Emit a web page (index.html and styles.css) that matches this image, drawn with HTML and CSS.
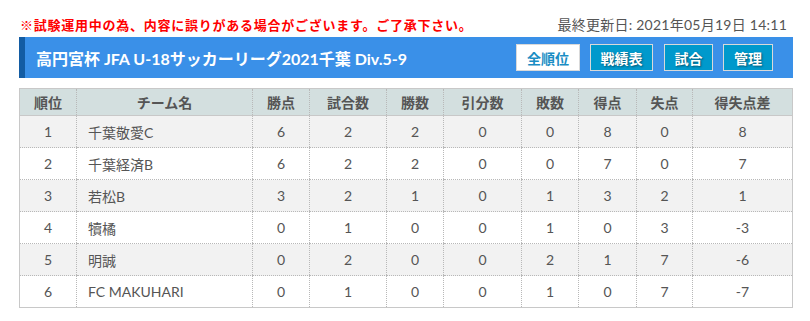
FILE: index.html
```html
<!DOCTYPE html>
<html lang="ja">
<head>
<meta charset="utf-8">
<title>高円宮杯 JFA U-18サッカーリーグ2021千葉 Div.5-9</title>
<link rel="stylesheet" href="styles.css">
</head>
<body>
<div class="page">
  <div class="topline">
    <p class="notice">※試験運用中の為、内容に誤りがある場合がございます。ご了承下さい。</p>
    <p class="updated">最終更新日: 2021年05月19日 14:11</p>
  </div>
  <div class="titlebar">
    <h1 class="title">高円宮杯 JFA U-18サッカーリーグ2021千葉 Div.5-9</h1>
    <nav class="tabs">
      <a class="tab tab-active w64">全順位</a>
      <a class="tab w63">戦績表</a>
      <a class="tab w49">試合</a>
      <a class="tab w50">管理</a>
    </nav>
  </div>
  <table class="standings">
    <colgroup>
      <col class="c57"><col class="c176"><col class="c57"><col class="c77"><col class="c57"><col class="c78"><col class="c57"><col class="c58"><col class="c56"><col class="c100">
    </colgroup>
    <thead>
      <tr><th>順位</th><th>チーム名</th><th>勝点</th><th>試合数</th><th>勝数</th><th>引分数</th><th>敗数</th><th>得点</th><th>失点</th><th>得失点差</th></tr>
    </thead>
    <tbody>
      <tr><td>1</td><td class="name">千葉敬愛C</td><td>6</td><td>2</td><td>2</td><td>0</td><td>0</td><td>8</td><td>0</td><td>8</td></tr>
      <tr><td>2</td><td class="name">千葉経済B</td><td>6</td><td>2</td><td>2</td><td>0</td><td>0</td><td>7</td><td>0</td><td>7</td></tr>
      <tr><td>3</td><td class="name">若松B</td><td>3</td><td>2</td><td>1</td><td>0</td><td>1</td><td>3</td><td>2</td><td>1</td></tr>
      <tr><td>4</td><td class="name">犢橘</td><td>0</td><td>1</td><td>0</td><td>0</td><td>1</td><td>0</td><td>3</td><td>-3</td></tr>
      <tr><td>5</td><td class="name">明誠</td><td>0</td><td>2</td><td>0</td><td>0</td><td>2</td><td>1</td><td>7</td><td>-6</td></tr>
      <tr><td>6</td><td class="name">FC MAKUHARI</td><td>0</td><td>1</td><td>0</td><td>0</td><td>1</td><td>0</td><td>7</td><td>-7</td></tr>
    </tbody>
  </table>
</div>
</body>
</html>
```
FILE: styles.css
```css
* { box-sizing: border-box; }
html, body { margin: 0; padding: 0; background: #fff; }
body {
  font-family: Lato, "Noto Sans CJK JP", sans-serif;
  color: #555;
}
.page {
  width: 774px;
  margin-left: 19px;
  padding-top: 14px;
}
.topline {
  display: flex;
  justify-content: space-between;
  align-items: center;
  height: 20px;
  margin-bottom: 3px;
}
.notice {
  margin: 0 0 0 1px;
  color: #f00;
  font-weight: bold;
  font-size: 13px;
  letter-spacing: 0.75px;
}
.updated {
  margin: 0 6px 0 0;
  font-size: 14px;
  letter-spacing: 0.25px;
  color: #555;
}
.titlebar {
  display: flex;
  align-items: center;
  justify-content: space-between;
  height: 41px;
  background: #3a90e8;
  border-left: 6px solid #135ca3;
  padding: 0 20px 0 11px;
}
.title {
  margin: 0;
  color: #fff;
  font-size: 16px;
  font-weight: bold;
}
.tabs {
  display: flex;
  gap: 10px;
}
.tab {
  display: flex;
  align-items: center;
  justify-content: center;
  height: 27px;
  background: #0099cc;
  border: 1px solid #d9d9d9;
  color: #fff;
  font-size: 14px;
  font-weight: bold;
  text-shadow: 1px 1px 2px rgba(0,0,0,0.45);
}
.tab-active {
  background: #fff;
  color: #1a8dc4;
  text-shadow: none;
}
.w64 { width: 64px; }
.w63 { width: 63px; margin-right: 1px; }
.w49 { width: 49px; }
.w50 { width: 50px; }
.standings {
  margin-top: 10px;
  width: 773px;
  border-collapse: collapse;
  table-layout: fixed;
  border: 1px solid #c8c8c8;
  font-size: 14px;
}
.c57 { width: 57px; }
.c176 { width: 176px; }
.c77 { width: 77px; }
.c78 { width: 78px; }
.c58 { width: 58px; }
.c56 { width: 56px; }
.c100 { width: 100px; }
.standings th {
  height: 27px;
  background: #d3dfdf;
  font-weight: bold;
  color: #555;
  text-align: center;
  padding: 0;
  border-left: 1px dotted #b8b8b8;
  border-bottom: 1px solid #c8c8c8;
}
.standings td {
  height: 32px;
  padding: 0;
  text-align: center;
  border-left: 1px dotted #b8b8b8;
  border-bottom: 1px dotted #b8b8b8;
  color: #555;
}
.standings tbody tr:nth-child(odd) td { background: #f2f2f2; }
.standings tbody tr:nth-child(even) td { background: #fff; }
.standings td.name {
  text-align: left;
  padding-left: 11px;
}
```
